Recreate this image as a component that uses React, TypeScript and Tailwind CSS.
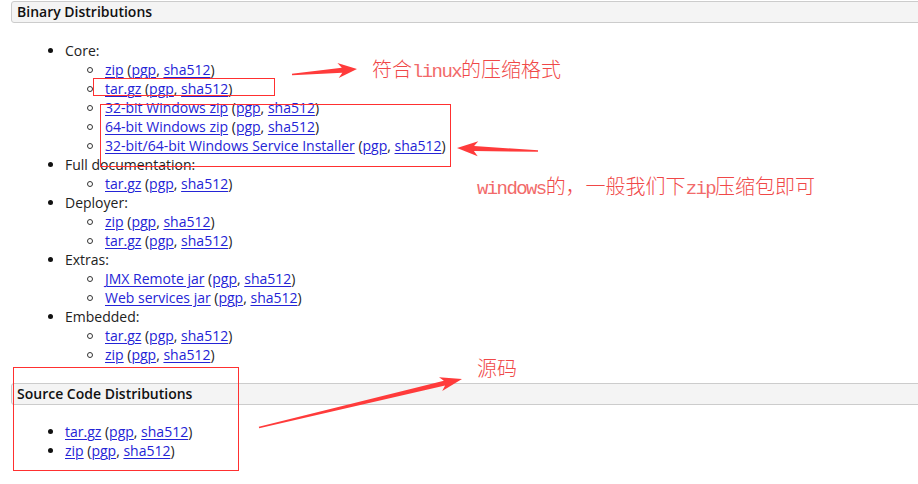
import React from 'react';

type Entry = { name: string; sub?: { label: string }[] };

const binary: Entry[] = [
  {
    name: 'Core:',
    sub: [
      { label: 'zip' },
      { label: 'tar.gz' },
      { label: '32-bit Windows zip' },
      { label: '64-bit Windows zip' },
      { label: '32-bit/64-bit Windows Service Installer' },
    ],
  },
  { name: 'Full documentation:', sub: [{ label: 'tar.gz' }] },
  { name: 'Deployer:', sub: [{ label: 'zip' }, { label: 'tar.gz' }] },
  { name: 'Extras:', sub: [{ label: 'JMX Remote jar' }, { label: 'Web services jar' }] },
  { name: 'Embedded:', sub: [{ label: 'tar.gz' }, { label: 'zip' }] },
];

const A = ({ children }: { children: React.ReactNode }) => (
  <a href="#" className="text-[#2424d6] underline underline-offset-[2px] decoration-1">
    {children}
  </a>
);

const Download = ({ label }: { label: string }) => (
  <span>
    <A>{label}</A> (<A>pgp</A>, <A>sha512</A>)
  </span>
);

const SectionBar = ({ title, className = '' }: { title: string; className?: string }) => (
  <div
    className={`ml-[11px] mr-[-4px] h-[22px] flex items-center pl-[5px] bg-[#f4f4f4] border border-[#cccccc] rounded-l-[3px] ${className}`}
  >
    <span className="text-[14px] font-semibold text-[#111] leading-[20px]">{title}</span>
  </div>
);

const DiscRow = ({ children }: { children: React.ReactNode }) => (
  <li className="flex items-center h-[19px] pl-[48px]">
    <span className="w-[5px] h-[5px] rounded-full bg-[#111] shrink-0" />
    <span className="ml-[12px]">{children}</span>
  </li>
);

const CircleRow = ({ children }: { children: React.ReactNode }) => (
  <li className="flex items-center h-[19px] pl-[87px]">
    <span className="w-[6px] h-[6px] rounded-full border border-[#333] shrink-0" />
    <span className="ml-[12px]">{children}</span>
  </li>
);

// tapered annotation arrow, tail -> tip
function arrow(tx: number, ty: number, hx: number, hy: number, headLen: number, headW: number, tailW: number, neckW: number) {
  const dx = hx - tx;
  const dy = hy - ty;
  const L = Math.hypot(dx, dy);
  const ux = dx / L;
  const uy = dy / L;
  const nx = -uy;
  const ny = ux;
  const bx = hx - ux * headLen;
  const by = hy - uy * headLen;
  const p = (x: number, y: number) => `${x.toFixed(1)},${y.toFixed(1)}`;
  return [
    p(tx + (nx * tailW) / 2, ty + (ny * tailW) / 2),
    p(bx + ux * 2 + (nx * neckW) / 2, by + uy * 2 + (ny * neckW) / 2),
    p(bx - ux * 2 + (nx * headW) / 2, by - uy * 2 + (ny * headW) / 2),
    p(hx, hy),
    p(bx - ux * 2 - (nx * headW) / 2, by - uy * 2 - (ny * headW) / 2),
    p(bx + ux * 2 - (nx * neckW) / 2, by + uy * 2 - (ny * neckW) / 2),
    p(tx - (nx * tailW) / 2, ty - (ny * tailW) / 2),
  ].join(' ');
}

const Note = ({ children, className }: { children: React.ReactNode; className: string }) => (
  <div
    className={`absolute text-[20px] leading-[20px] text-[#f04848] whitespace-nowrap font-['Noto_Sans_CJK_SC',sans-serif] font-light ${className}`}
  >
    {children}
  </div>
);

const Mono = ({ children }: { children: React.ReactNode }) => (
  <span className="font-['Liberation_Mono',monospace] text-[19px] text-[#f26a6a] tracking-[-1.6px]">{children}</span>
);

export default function App() {
  return (
    <div className="relative w-[918px] h-[484px] bg-white overflow-hidden font-['Open_Sans',sans-serif] text-[14px] text-[#222]">
      <div className="pt-[1px]">
        <SectionBar title="Binary Distributions" />

        <ul className="mt-[18px] leading-[19px]">
          {binary.map((e) => (
            <React.Fragment key={e.name}>
              <DiscRow>{e.name}</DiscRow>
              {e.sub?.map((s, i) => (
                <CircleRow key={i}>
                  <Download label={s.label} />
                </CircleRow>
              ))}
            </React.Fragment>
          ))}
        </ul>

        <SectionBar title="Source Code Distributions" className="mt-[19px]" />

        <ul className="mt-[17px] leading-[19px]">
          <DiscRow>
            <Download label="tar.gz" />
          </DiscRow>
          <DiscRow>
            <Download label="zip" />
          </DiscRow>
        </ul>
      </div>

      {/* annotation boxes */}
      <div className="absolute left-[93px] top-[78px] w-[182px] h-[18px] border border-[#ff3030]" />
      <div className="absolute left-[100px] top-[104px] w-[351px] h-[63px] border border-[#ff3030]" />
      <div className="absolute left-[13px] top-[367px] w-[226px] h-[104px] border border-[#ff3030]" />

      {/* annotation arrows */}
      <svg className="absolute inset-0 pointer-events-none" width={918} height={484}>
        <polygon points={arrow(292, 74.5, 357, 69, 17, 15, 1.5, 5)} fill="#ff3b3b" />
        <polygon points={arrow(538, 151, 457, 148, 19, 15, 1.5, 5)} fill="#ff3b3b" />
        <polygon points={arrow(259, 427.5, 462, 379, 20, 14, 1.5, 5)} fill="#ff3b3b" />
      </svg>

      <Note className="left-[372px] top-[59px]">
        符合<Mono>linux</Mono>的压缩格式
      </Note>
      <Note className="left-[477px] top-[176px]">
        <Mono>windows</Mono>的，一般我们下<Mono>zip</Mono>压缩包即可
      </Note>
      <Note className="left-[477px] top-[358px]">源码</Note>
    </div>
  );
}
